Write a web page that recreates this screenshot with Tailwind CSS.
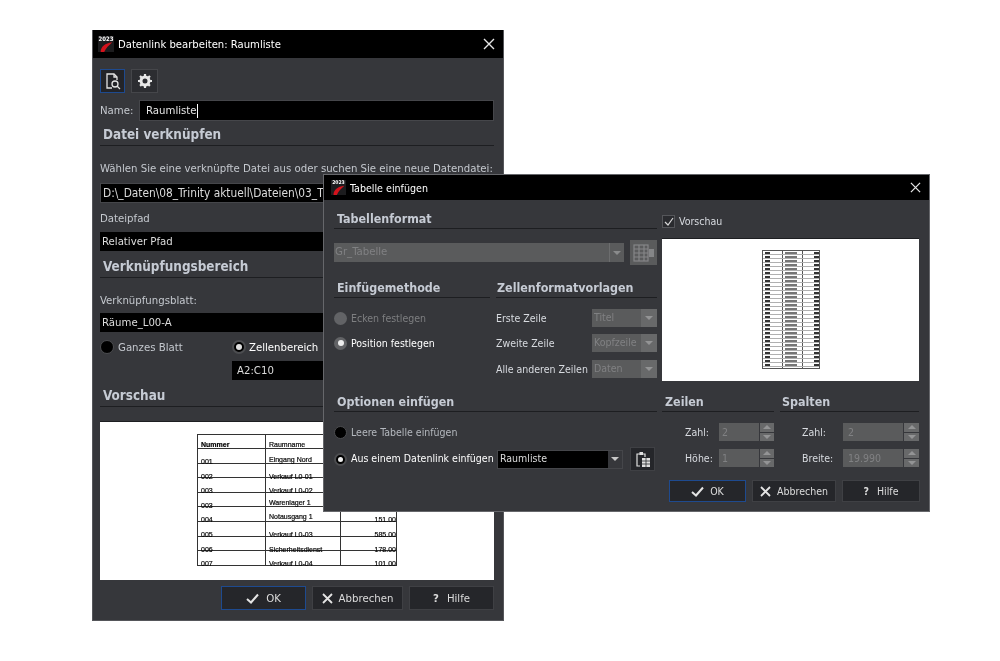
<!DOCTYPE html>
<html>
<head>
    <script src="https://cdn.jsdelivr.net/npm/@tailwindcss/browser@4"></script>
</head>
<body class="bg-white">
<div class="relative w-[1000px] h-[661px] overflow-hidden bg-white font-['DejaVu_Sans',sans-serif] font-stretch-condensed text-[11.3px] text-[#c4c8ce] blur-[0.35px]">

    <!-- Datenlink window -->
    <div class="absolute left-[92px] top-[30px] w-[412px] h-[591px] bg-[#36373b] border-x border-b border-[#55565a] flex flex-col">
        <div class="h-[28px] shrink-0 bg-black flex items-center pl-[5px] pr-[8px] text-white">
            <div class="relative w-[16px] h-[16px] bg-[#1c1c1e] overflow-hidden">
                <span class="absolute left-0 top-[-1px] w-full text-center text-[6px] leading-[8px] font-bold text-white">2023</span>
                <svg class="absolute left-0 top-0" width="16" height="16" viewBox="0 0 18 18"><path d="M3 18 C3 12 8 8 16 7 C12 11 9 13 7 18 Z" fill="#d3121c"/></svg>
            </div>
            <span class="ml-[4px] text-[11.2px] translate-y-px">Datenlink bearbeiten: Raumliste</span>
            <svg class="ml-auto" width="12" height="12" viewBox="0 0 12 12"><path d="M1 1 L11 11 M11 1 L1 11" stroke="#e6e6e6" stroke-width="1.4"/></svg>
        </div>
        <div class="flex-1 pl-[7px] pr-[9px]">
            <div class="mt-[11px] h-[24px] flex gap-[6px]">
                <div class="w-[25px] h-[24px] bg-[#232428] border border-[#1e4a8f] flex items-center justify-center">
                    <svg width="18" height="18" viewBox="0 0 18 18" fill="none" stroke="#e4e4e4" stroke-width="1.3"><path d="M8 16 H3 V2 H10 L13 5 V8"/><path d="M10 2 V5 H13"/><circle cx="11" cy="12" r="3"/><path d="M13 14 L16 17"/></svg>
                </div>
                <div class="w-[27px] h-[24px] bg-[#2c2d31] border border-[#45464a] flex items-center justify-center">
                    <svg width="16" height="16" viewBox="0 0 16 16"><circle cx="8" cy="8" r="4" fill="none" stroke="#e8e8e8" stroke-width="3"/><path d="M8 1 V15 M1 8 H15 M3 3 L13 13 M13 3 L3 13" stroke="#e8e8e8" stroke-width="2.2" stroke-dasharray="2.6 8.8 2.6"/></svg>
                </div>
            </div>
            <div class="mt-[7px] h-[21px] flex items-center">
                <span class="w-[39px] translate-y-px">Name:</span>
                <div class="flex-1 h-[21px] bg-black border border-[#45464a] pl-[6px] flex items-center text-[#e4e4e4]"><span class="translate-y-px">Raumliste</span><span class="w-px h-[14px] bg-white"></span></div>
            </div>
            <div class="mt-[3px] h-[22px] border-b border-[#1d1e21] pl-[3px] text-[13.4px] leading-[22px] font-bold text-[#c6cbd4]">Datei verknüpfen</div>
            <div class="mt-[14px] h-[16px] leading-[17px] whitespace-nowrap">Wählen Sie eine verknüpfte Datei aus oder suchen Sie eine neue Datendatei:</div>
            <div class="mt-[7px] h-[20px] bg-black border border-[#45464a] pl-[2px] text-[11.8px] leading-[18px] text-[#dcdcdc] whitespace-nowrap overflow-hidden">D:\_Daten\08_Trinity aktuell\Dateien\03_T</div>
            <div class="mt-[7px] h-[16px] leading-[18px]">Dateipfad</div>
            <div class="mt-[6px] h-[19px] bg-black pl-[2px] leading-[19px] text-[#dcdcdc]">Relativer Pfad</div>
            <div class="mt-[4px] h-[23px] border-b border-[#1d1e21] pl-[3px] text-[13.4px] leading-[23px] font-bold text-[#c6cbd4]">Verknüpfungsbereich</div>
            <div class="mt-[14px] h-[16px] leading-[18px]">Verknüpfungsblatt:</div>
            <div class="mt-[5px] h-[19px] bg-black pl-[2px] leading-[19px] text-[#dcdcdc]">Räume_L00-A</div>
            <div class="mt-[7px] h-[16px] flex items-center">
                <div class="w-[14px] h-[14px] rounded-full bg-black border border-[#4c4d50]"></div>
                <span class="ml-[4px] w-[114px] translate-y-px">Ganzes Blatt</span>
                <div class="w-[14px] h-[14px] rounded-full bg-black border-2 border-[#4c4d50] flex items-center justify-center"><div class="w-[6px] h-[6px] rounded-full bg-[#e0e0e0]"></div></div>
                <span class="ml-[3px] text-white translate-y-px">Zellenbereich</span>
            </div>
            <div class="mt-[6px] ml-[132px] h-[19px] bg-black pl-[5px] leading-[19px] text-[#dcdcdc]">A2:C10</div>
            <div class="mt-[5px] h-[22px] border-b border-[#1d1e21] pl-[3px] text-[13.4px] leading-[22px] font-bold text-[#c6cbd4]">Vorschau</div>
            <div class="mt-[14px] h-[159px] bg-white border-t border-[#1d1e21] pl-[97px] pt-[12px] font-['Liberation_Sans',sans-serif] text-[7px] text-black [-webkit-text-stroke:0.2px_#111] font-stretch-normal">
                <div class="w-[200px] border border-[#333] border-b-0 grid grid-cols-[68px_75px_1fr]">
                    <div class="h-[14px] border-b border-r border-[#333] flex items-end pl-[3px]"><span class="translate-y-[2px] font-bold">Nummer</span></div>
                    <div class="h-[14px] border-b border-r border-[#333] flex items-end pl-[3px]"><span class="translate-y-[2px]">Raumname</span></div>
                    <div class="h-[14px] border-b border-[#333]"></div>
                    <div class="h-[14.6px] border-b border-r border-[#333] flex items-end pl-[3px]"><span class="translate-y-[5px]">001</span></div>
                    <div class="h-[14.6px] border-b border-r border-[#333] flex items-end pl-[3px]"><span class="translate-y-[3px]">Eingang Nord</span></div>
                    <div class="h-[14.6px] border-b border-[#333]"></div>
                    <div class="h-[14.6px] border-b border-r border-[#333] flex items-end pl-[3px]"><span class="translate-y-[5px]">002</span></div>
                    <div class="h-[14.6px] border-b border-r border-[#333] flex items-end pl-[3px]"><span class="translate-y-[5px]">Verkauf L0-01</span></div>
                    <div class="h-[14.6px] border-b border-[#333]"></div>
                    <div class="h-[14.6px] border-b border-r border-[#333] flex items-end pl-[3px]"><span class="translate-y-[5px]">003</span></div>
                    <div class="h-[14.6px] border-b border-r border-[#333] flex items-end pl-[3px]"><span class="translate-y-[5px]">Verkauf L0-02</span></div>
                    <div class="h-[14.6px] border-b border-[#333]"></div>
                    <div class="h-[14.6px] border-b border-r border-[#333] flex items-end pl-[3px]"><span class="translate-y-[5px]">003</span></div>
                    <div class="h-[14.6px] border-b border-r border-[#333] flex items-end pl-[3px]"><span class="translate-y-[2px]">Warenlager 1</span></div>
                    <div class="h-[14.6px] border-b border-[#333]"></div>
                    <div class="h-[14.6px] border-b border-r border-[#333] flex items-end pl-[3px]"><span class="translate-y-[5px]">004</span></div>
                    <div class="h-[14.6px] border-b border-r border-[#333] flex items-end pl-[3px]"><span class="translate-y-[2px]">Notausgang 1</span></div>
                    <div class="h-[14.6px] border-b border-[#333] flex items-end justify-end"><span class="translate-y-[5px]">151.00</span></div>
                    <div class="h-[14.6px] border-b border-r border-[#333] flex items-end pl-[3px]"><span class="translate-y-[5px]">005</span></div>
                    <div class="h-[14.6px] border-b border-r border-[#333] flex items-end pl-[3px]"><span class="translate-y-[5px]">Verkauf L0-03</span></div>
                    <div class="h-[14.6px] border-b border-[#333] flex items-end justify-end"><span class="translate-y-[5px]">585.00</span></div>
                    <div class="h-[14.6px] border-b border-r border-[#333] flex items-end pl-[3px]"><span class="translate-y-[5px]">006</span></div>
                    <div class="h-[14.6px] border-b border-r border-[#333] flex items-end pl-[3px]"><span class="translate-y-[5px]">Sicherheitsdienst</span></div>
                    <div class="h-[14.6px] border-b border-[#333] flex items-end justify-end"><span class="translate-y-[5px]">178.00</span></div>
                    <div class="h-[14.6px] border-b border-r border-[#333] flex items-end pl-[3px]"><span class="translate-y-[5px]">007</span></div>
                    <div class="h-[14.6px] border-b border-r border-[#333] flex items-end pl-[3px]"><span class="translate-y-[5px]">Verkauf L0-04</span></div>
                    <div class="h-[14.6px] border-b border-[#333] flex items-end justify-end"><span class="translate-y-[5px]">101.00</span></div>
                </div>
            </div>
            <div class="mt-[6px] h-[24px] flex justify-end gap-[6px]">
                <div class="w-[85px] bg-[#25262a] border border-[#1e4a8f] flex items-center justify-center gap-[7px] text-[#dcdcdc]">
                    <svg width="13" height="11" viewBox="0 0 13 11"><path d="M1 6 L5 9.5 L12 1.5" fill="none" stroke="#e4e4e4" stroke-width="2"/></svg><span class="translate-y-px">OK</span>
                </div>
                <div class="w-[91px] bg-[#25262a] border border-[#3f4044] flex items-center justify-center gap-[6px] text-[#dcdcdc]">
                    <svg width="11" height="11" viewBox="0 0 11 11"><path d="M1 1 L10 10 M10 1 L1 10" stroke="#e4e4e4" stroke-width="1.8"/></svg><span class="translate-y-px">Abbrechen</span>
                </div>
                <div class="w-[85px] bg-[#25262a] border border-[#3f4044] flex items-center justify-center gap-[8px] text-[#dcdcdc]"><b class="font-bold translate-y-px">?</b><span class="translate-y-px">Hilfe</span></div>
            </div>
        </div>
    </div>

    <!-- Tabelle einfuegen window -->
    <div class="absolute left-[323px] top-[174px] w-[607px] h-[338px] bg-[#36373b] border border-[#66676b] flex flex-col">
        <div class="h-[25px] shrink-0 bg-black flex items-center pl-[7px] pr-[8px] text-white">
            <div class="relative w-[15px] h-[15px] bg-[#1c1c1e] overflow-hidden">
                <span class="absolute left-0 top-[-1px] w-full text-center text-[5px] leading-[7px] font-bold text-white">2023</span>
                <svg class="absolute left-0 top-0" width="15" height="15" viewBox="0 0 18 18"><path d="M3 18 C3 12 8 8 16 7 C12 11 9 13 7 18 Z" fill="#d3121c"/></svg>
            </div>
            <span class="ml-[4px] text-[10.6px] translate-y-px">Tabelle einfügen</span>
            <svg class="ml-auto" width="11" height="11" viewBox="0 0 12 12"><path d="M1 1 L11 11 M11 1 L1 11" stroke="#e6e6e6" stroke-width="1.4"/></svg>
        </div>
        <div class="pl-[10px] pr-[9px] text-[10.5px]">
            <div class="flex gap-[5px] h-[190px]">
                <div class="w-[323px]">
                    <div class="mt-[7px] h-[22px] border-b border-[#1d1e21] pl-[3px] text-[12.4px] leading-[23px] font-bold text-[#c6cbd4]">Tabellenformat</div>
                    <div class="mt-[11px] h-[25px] flex items-center">
                        <div class="w-[290px] h-[19px] bg-[#5a5b5c] flex items-center pl-[1px] text-[#808183] text-[11.3px]">
                            <span class="flex-1">Gr_Tabelle</span>
                            <div class="w-[15px] h-full border-l border-[#6c6d6e] flex items-center justify-center"><div class="w-0 h-0 border-x-[4px] border-t-[4px] border-x-transparent border-t-[#8a8b8c]"></div></div>
                        </div>
                        <div class="ml-[6px] w-[27px] h-[25px] bg-[#5a5b5c] flex items-center justify-center">
                            <svg width="22" height="20" viewBox="0 0 22 20" fill="none" stroke="#858688" stroke-width="1.2"><rect x="1" y="2" width="14" height="16"/><path d="M1 6 H15 M1 10 H15 M1 14 H15 M6 2 V18 M11 2 V18"/><rect x="16" y="6" width="5" height="8" fill="#858688" stroke="none"/></svg>
                        </div>
                    </div>
                    <div class="mt-[11px] flex gap-[6px]">
                        <div class="w-[156px]">
                            <div class="h-[22px] border-b border-[#1d1e21] pl-[3px] text-[12.4px] leading-[23px] font-bold text-[#c6cbd4]">Einfügemethode</div>
                            <div class="mt-[12px] h-[16px] flex items-center text-[#7e7f81]">
                                <div class="w-[13px] h-[13px] rounded-full bg-[#626366]"></div><span class="ml-[4px] translate-y-px">Ecken festlegen</span>
                            </div>
                            <div class="mt-[9px] h-[16px] flex items-center text-white">
                                <div class="w-[13px] h-[13px] rounded-full bg-[#626366] flex items-center justify-center"><div class="w-[6px] h-[6px] rounded-full bg-[#eeeeee]"></div></div><span class="ml-[4px] translate-y-px">Position festlegen</span>
                            </div>
                        </div>
                        <div class="w-[161px]">
                            <div class="h-[22px] border-b border-[#1d1e21] pl-[1px] text-[12.4px] leading-[23px] font-bold text-[#c6cbd4] whitespace-nowrap">Zellenformatvorlagen</div>
                            <div class="mt-[11px] h-[18px] flex items-center">
                                <span class="w-[96px] text-[#d8dbe0] whitespace-nowrap translate-y-px">Erste Zeile</span>
                                <div class="flex-1 h-full bg-[#5a5b5c] flex items-center pl-[2px] text-[#808183]"><span class="flex-1">Titel</span><div class="w-[16px] h-full bg-[#68696a] flex items-center justify-center"><div class="w-0 h-0 border-x-[4px] border-t-[4px] border-x-transparent border-t-[#939495]"></div></div></div>
                            </div>
                            <div class="mt-[7px] h-[18px] flex items-center">
                                <span class="w-[96px] text-[#d8dbe0] whitespace-nowrap translate-y-px">Zweite Zeile</span>
                                <div class="flex-1 h-full bg-[#5a5b5c] flex items-center pl-[2px] text-[#808183]"><span class="flex-1">Kopfzeile</span><div class="w-[16px] h-full bg-[#68696a] flex items-center justify-center"><div class="w-0 h-0 border-x-[4px] border-t-[4px] border-x-transparent border-t-[#939495]"></div></div></div>
                            </div>
                            <div class="mt-[8px] h-[18px] flex items-center">
                                <span class="w-[96px] text-[#d8dbe0] whitespace-nowrap translate-y-px">Alle anderen Zeilen</span>
                                <div class="flex-1 h-full bg-[#5a5b5c] flex items-center pl-[2px] text-[#808183]"><span class="flex-1">Daten</span><div class="w-[16px] h-full bg-[#68696a] flex items-center justify-center"><div class="w-0 h-0 border-x-[4px] border-t-[4px] border-x-transparent border-t-[#939495]"></div></div></div>
                            </div>
                        </div>
                    </div>
                </div>
                <div class="w-[257px]">
                    <div class="mt-[13px] h-[16px] flex items-center text-[#d8dbe0]">
                        <div class="w-[13px] h-[13px] bg-[#2a2b2f] border border-[#55565a] flex items-center justify-center">
                            <svg width="10" height="9" viewBox="0 0 10 9"><path d="M1 5 L4 8 L9 1" fill="none" stroke="#d8d8d8" stroke-width="1.2"/></svg>
                        </div>
                        <span class="ml-[4px] translate-y-px">Vorschau</span>
                    </div>
                    <div class="mt-[9px] h-[143px] bg-white border-t border-[#1d1e21] flex justify-center pt-[11px]">
                        <div id="mini-table" class="w-[58px] h-[119px] border border-[#555] flex flex-col overflow-hidden"></div>
                    </div>
                </div>
            </div>
            <div class="flex gap-[5px] h-[81px]">
                <div class="w-[323px]">
                    <div class="h-[22px] border-b border-[#1d1e21] pl-[3px] text-[12.4px] leading-[23px] font-bold text-[#c6cbd4]">Optionen einfügen</div>
                    <div class="mt-[12px] h-[16px] flex items-center text-[#b4b8be]">
                        <div class="w-[13px] h-[13px] rounded-full bg-black border border-[#4c4d50]"></div><span class="ml-[4px] translate-y-px">Leere Tabelle einfügen</span>
                    </div>
                    <div class="mt-[7px] h-[24px] flex items-center text-white">
                        <div class="w-[13px] h-[13px] rounded-full bg-black border-2 border-[#4c4d50] flex items-center justify-center"><div class="w-[5px] h-[5px] rounded-full bg-[#eeeeee]"></div></div>
                        <span class="ml-[4px] w-[146px] whitespace-nowrap">Aus einem Datenlink einfügen</span>
                        <div class="w-[126px] h-[19px] bg-black border border-[#45464a] flex items-center pl-[2px] text-[#dcdcdc]">
                            <span class="flex-1">Raumliste</span>
                            <div class="w-[14px] h-full bg-[#36373b] flex items-center justify-center"><div class="w-0 h-0 border-x-[4px] border-t-[4px] border-x-transparent border-t-[#c8c8c8]"></div></div>
                        </div>
                        <div class="ml-[7px] w-[25px] h-[24px] bg-[#25262a] border border-[#3f4044] flex items-center justify-center">
                            <svg width="16" height="17" viewBox="0 0 16 17" fill="none" stroke="#e0e0e0" stroke-width="1.2"><path d="M5 15 H2 V3 H10 V6"/><rect x="4.5" y="1" width="3.5" height="3" fill="#e0e0e0" stroke="none"/><rect x="7" y="7" width="8" height="9" fill="#e0e0e0" stroke="none"/><path d="M7 10 H15 M7 13 H15 M11 7 V16" stroke="#2a2b2f" stroke-width="0.8"/></svg>
                        </div>
                    </div>
                </div>
                <div class="w-[112px]">
                    <div class="h-[22px] border-b border-[#1d1e21] pl-[3px] text-[12.4px] leading-[23px] font-bold text-[#c6cbd4]">Zeilen</div>
                    <div class="mt-[11px] h-[18px] flex items-center">
                        <span class="w-[57px] pl-[23px] text-[#d8dbe0] translate-y-px">Zahl:</span>
                        <div class="w-[40px] h-full bg-[#5a5b5c] pl-[3px] leading-[18px] text-[#808183]">2</div>
                        <div class="ml-px flex-1 h-full flex flex-col gap-px">
                            <div class="flex-1 bg-[#68696a] flex items-center justify-center"><div class="w-0 h-0 border-x-[4px] border-b-[4px] border-x-transparent border-b-[#939495]"></div></div>
                            <div class="flex-1 bg-[#68696a] flex items-center justify-center"><div class="w-0 h-0 border-x-[4px] border-t-[4px] border-x-transparent border-t-[#939495]"></div></div>
                        </div>
                    </div>
                    <div class="mt-[8px] h-[18px] flex items-center">
                        <span class="w-[57px] pl-[23px] text-[#d8dbe0] translate-y-px">Höhe:</span>
                        <div class="w-[40px] h-full bg-[#5a5b5c] pl-[3px] leading-[18px] text-[#808183]">1</div>
                        <div class="ml-px flex-1 h-full flex flex-col gap-px">
                            <div class="flex-1 bg-[#68696a] flex items-center justify-center"><div class="w-0 h-0 border-x-[4px] border-b-[4px] border-x-transparent border-b-[#939495]"></div></div>
                            <div class="flex-1 bg-[#68696a] flex items-center justify-center"><div class="w-0 h-0 border-x-[4px] border-t-[4px] border-x-transparent border-t-[#939495]"></div></div>
                        </div>
                    </div>
                </div>
                <div class="ml-px w-[139px]">
                    <div class="h-[22px] border-b border-[#1d1e21] pl-[2px] text-[12.4px] leading-[23px] font-bold text-[#c6cbd4]">Spalten</div>
                    <div class="mt-[11px] h-[18px] flex items-center">
                        <span class="w-[63px] pl-[22px] text-[#d8dbe0] translate-y-px">Zahl:</span>
                        <div class="w-[60px] h-full bg-[#5a5b5c] pl-[5px] leading-[18px] text-[#808183]">2</div>
                        <div class="ml-px flex-1 h-full flex flex-col gap-px">
                            <div class="flex-1 bg-[#68696a] flex items-center justify-center"><div class="w-0 h-0 border-x-[4px] border-b-[4px] border-x-transparent border-b-[#939495]"></div></div>
                            <div class="flex-1 bg-[#68696a] flex items-center justify-center"><div class="w-0 h-0 border-x-[4px] border-t-[4px] border-x-transparent border-t-[#939495]"></div></div>
                        </div>
                    </div>
                    <div class="mt-[8px] h-[18px] flex items-center">
                        <span class="w-[63px] pl-[22px] text-[#d8dbe0] translate-y-px">Breite:</span>
                        <div class="w-[60px] h-full bg-[#5a5b5c] pl-[5px] leading-[18px] text-[#808183]">19.990</div>
                        <div class="ml-px flex-1 h-full flex flex-col gap-px">
                            <div class="flex-1 bg-[#68696a] flex items-center justify-center"><div class="w-0 h-0 border-x-[4px] border-b-[4px] border-x-transparent border-b-[#939495]"></div></div>
                            <div class="flex-1 bg-[#68696a] flex items-center justify-center"><div class="w-0 h-0 border-x-[4px] border-t-[4px] border-x-transparent border-t-[#939495]"></div></div>
                        </div>
                    </div>
                </div>
            </div>
            <div class="mt-[9px] h-[22px] flex justify-end gap-[6px]">
                <div class="w-[77px] bg-[#25262a] border border-[#1e4a8f] flex items-center justify-center gap-[6px] text-[#dcdcdc]">
                    <svg width="13" height="11" viewBox="0 0 13 11"><path d="M1 6 L5 9.5 L12 1.5" fill="none" stroke="#e4e4e4" stroke-width="2"/></svg><span class="translate-y-px">OK</span>
                </div>
                <div class="w-[84px] bg-[#25262a] border border-[#3f4044] flex items-center justify-center gap-[6px] text-[#dcdcdc]">
                    <svg width="11" height="11" viewBox="0 0 11 11"><path d="M1 1 L10 10 M10 1 L1 10" stroke="#e4e4e4" stroke-width="1.8"/></svg><span class="translate-y-px">Abbrechen</span>
                </div>
                <div class="w-[78px] bg-[#25262a] border border-[#3f4044] flex items-center justify-center gap-[8px] text-[#dcdcdc]"><b class="font-bold translate-y-px">?</b><span class="translate-y-px">Hilfe</span></div>
            </div>
        </div>
    </div>
</div>

<script>
    // thumbnail rows of the small preview, unreadable in the original too
    const miniTable = document.getElementById('mini-table');
    for (let i = 0; i < 30; i++) {
        const row = document.createElement('div');
        row.className = 'h-[4px] shrink-0 grid grid-cols-[20px_20px_1fr] border-b border-[#b0b0b0]';
        row.innerHTML =
            '<div class="border-r border-[#555] pl-[2px] pt-px"><div class="w-[5px] h-[2px] bg-[#333]"></div></div>' +
            '<div class="border-r border-[#555] pl-[2px] pt-px"><div class="w-[12px] h-[2px] bg-[#777]"></div></div>' +
            '<div class="flex justify-end pt-px"><div class="w-[5px] h-[2px] bg-[#333]"></div></div>';
        miniTable.appendChild(row);
    }
</script>
</body>
</html>
